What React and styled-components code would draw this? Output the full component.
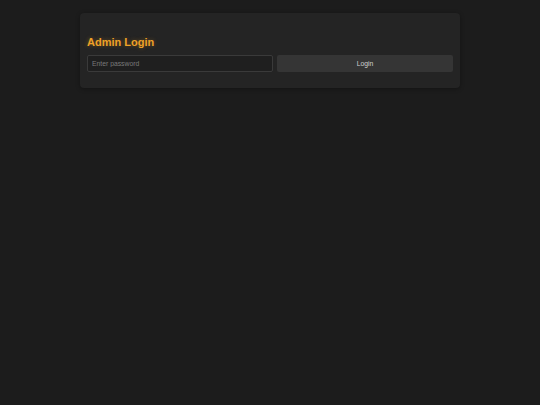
import React from "react";
import styled, { createGlobalStyle } from "styled-components";

const Global = createGlobalStyle`
  html, body {
    margin: 0;
    padding: 0;
    background: #1c1c1c;
    font-family: "Liberation Sans", Arial, sans-serif;
  }
`;

const Page = styled.div`
  min-height: 405px;
  display: flex;
  justify-content: center;
  padding-top: 13px;
  box-sizing: border-box;
`;

const Card = styled.div`
  width: 380px;
  height: 75px;
  box-sizing: border-box;
  background: #242424;
  border-radius: 4px;
  padding: 22px 7px 0;
  box-shadow: 0 1px 4px rgba(0, 0, 0, 0.35);
`;

const Title = styled.h2`
  margin: 0 0 6px;
  font-size: 11px;
  line-height: 14px;
  font-weight: bold;
  letter-spacing: 0;
  color: #eea127;
  text-shadow: 0 0 4px rgba(238, 161, 39, 0.35);
`;

const Row = styled.div`
  display: flex;
  gap: 4px;
`;

const Input = styled.input`
  width: 186px;
  height: 17px;
  box-sizing: border-box;
  background: #1f1f1f;
  border: 1px solid #3a3a3a;
  border-radius: 2px;
  padding: 0 4px;
  color: #ddd;
  font-family: inherit;
  font-size: 6.8px;
  outline: none;
  &::placeholder {
    color: #7a7a7a;
  }
`;

const Button = styled.button`
  flex: 1;
  height: 17px;
  background: #353535;
  border: none;
  border-radius: 2px;
  color: #d0d0d0;
  font-family: inherit;
  font-size: 6.8px;
  font-weight: normal;
  padding: 0;
`;

export default function App() {
  return (
    <>
      <Global />
      <Page>
        <Card>
          <Title>Admin Login</Title>
          <Row>
            <Input type="password" placeholder="Enter password" />
            <Button>Login</Button>
          </Row>
        </Card>
      </Page>
    </>
  );
}
